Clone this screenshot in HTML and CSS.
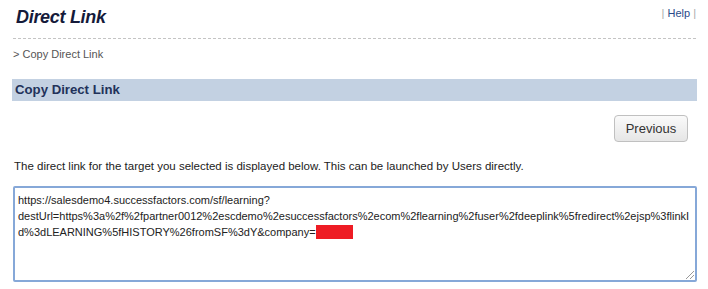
FILE: index.html
```html
<!DOCTYPE html>
<html>
<head>
<meta charset="utf-8">
<link rel="stylesheet" href="styles.css">
</head>
<body>
<div class="page">
  <div class="header">
    <h1 class="title">Direct Link</h1>
    <div class="help"><span class="sep">|</span> <a href="#">Help</a> <span class="sep">|</span></div>
  </div>
  <div class="crumb">&gt; Copy Direct Link</div>
  <div class="bar">Copy Direct Link</div>
  <div class="actions"><button class="btn">Previous</button></div>
  <p class="desc">The direct link for the target you selected is displayed below. This can be launched by Users directly.</p>
  <div class="box">
    <span class="ln">https://salesdemo4.successfactors.com/sf/learning?</span>
    <span class="ln">destUrl=https%3a%2f%2fpartner0012%2escdemo%2esuccessfactors%2ecom%2flearning%2fuser%2fdeeplink%5fredirect%2ejsp%3flinkI</span>
    <span class="ln">d%3dLEARNING%5fHISTORY%26fromSF%3dY&amp;company=<span class="redact"></span></span>
    <span class="grip"></span>
  </div>
</div>
</body>
</html>
```
FILE: styles.css
```css
html, body { margin: 0; padding: 0; background: #fff; }
body { font-family: "Liberation Sans", Arial, sans-serif; color: #222; }
.page { padding: 0 11px 0 12px; }
.header { display: flex; justify-content: space-between; align-items: flex-start; height: 38px; border-bottom: 1px dashed #c4c4c4; margin: 0 1px; }
.title { margin: 7px 0 0 3px; font-size: 18px; font-weight: bold; font-style: italic; color: #151a3a; letter-spacing: -0.3px; }
.help { font-size: 11px; margin-top: 7px; color: #999; }
.help a { color: #2a4a8a; text-decoration: none; }
.help .sep { color: #aaa; }
.crumb { font-size: 11px; color: #555; margin: 9px 0 0 1px; height: 13px; line-height: 13px; }
.bar { margin-top: 18px; height: 22px; line-height: 22px; background: #c3d1e2; color: #22325a; font-weight: bold; font-size: 13.2px; padding-left: 3px; }
.actions { display: flex; justify-content: flex-end; margin-top: 14px; padding-right: 9px; }
.btn { width: 74px; height: 27px; border: 1px solid #c0c0c0; border-radius: 4px; background: linear-gradient(#fafafa, #e6e6e6); font-family: "Liberation Sans", Arial, sans-serif; font-size: 13px; color: #333; padding: 0; }
.desc { font-size: 11.5px; margin: 16px 0 0 2px; line-height: 16px; color: #222; }
.box { position: relative; margin: 12px 0 0 1px; height: 83px; border: 2px solid #86a8d8; border-radius: 2px; padding: 4px 3px 5px 3px; font-size: 11px; line-height: 16px; color: #222; overflow: hidden; }
.ln { display: block; white-space: nowrap; }
.redact { display: inline-block; width: 37px; height: 14px; background: #ee1c24; vertical-align: -3px; }
.grip { position: absolute; right: 1px; bottom: 1px; width: 8px; height: 8px; background: linear-gradient(135deg, transparent 45%, #999 45%, #999 55%, transparent 55%, transparent 70%, #999 70%, #999 80%, transparent 80%); }
```
